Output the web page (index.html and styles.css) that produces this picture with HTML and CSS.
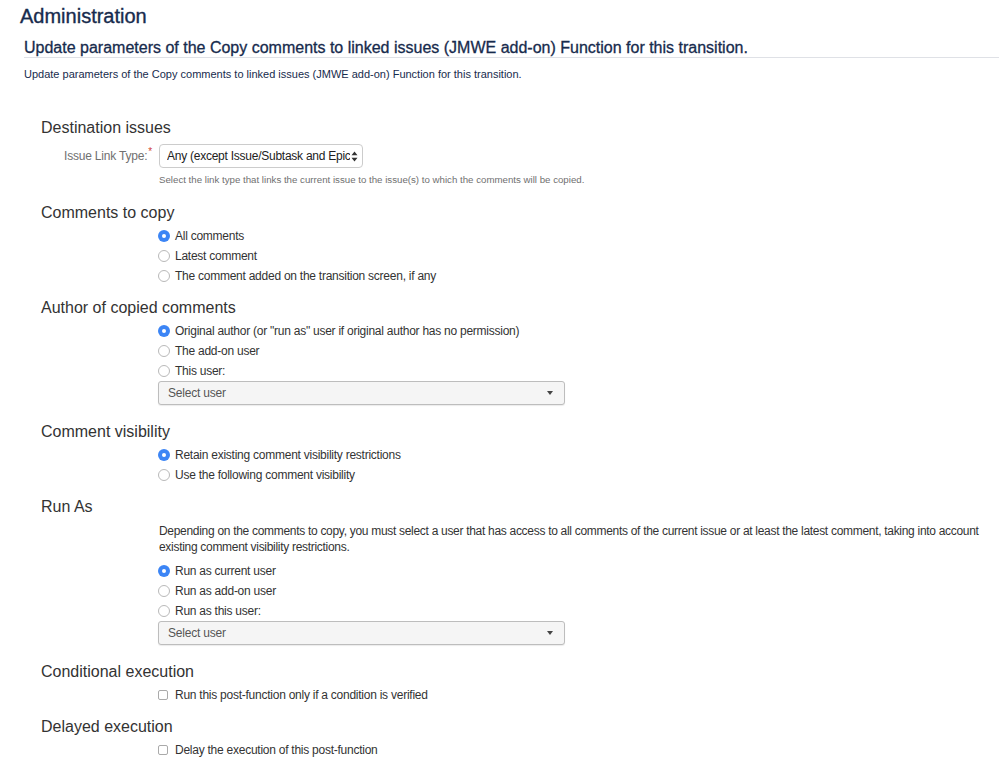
FILE: index.html
```html
<!DOCTYPE html>
<html>
<head>
<meta charset="utf-8">
<link rel="stylesheet" href="styles.css">
</head>
<body>
<h1 class="admin">Administration</h1>
<h2 class="sub">Update parameters of the Copy comments to linked issues (JMWE add-on) Function for this transition.</h2>
<p class="desc">Update parameters of the Copy comments to linked issues (JMWE add-on) Function for this transition.</p>

<div class="form">
  <section class="section">
    <h3>Destination issues</h3>
    <div class="field-row">
      <label class="flabel">Issue Link Type:<span class="req">*</span></label>
      <div class="fbody">
        <div class="nselect"><span class="nsel-text">Any (except Issue/Subtask and Epic</span>
          <svg class="updown" width="7" height="11" viewBox="0 0 7 11"><path d="M3.5 0.5 L6.5 4.2 H0.5 Z M3.5 10.5 L6.5 6.8 H0.5 Z" fill="#333"/></svg>
        </div>
        <div class="help">Select the link type that links the current issue to the issue(s) to which the comments will be copied.</div>
      </div>
    </div>
  </section>

  <section class="section">
    <h3>Comments to copy</h3>
    <div class="opts">
      <div class="opt"><span class="radio on"></span>All comments</div>
      <div class="opt"><span class="radio"></span>Latest comment</div>
      <div class="opt"><span class="radio"></span>The comment added on the transition screen, if any</div>
    </div>
  </section>

  <section class="section">
    <h3>Author of copied comments</h3>
    <div class="opts">
      <div class="opt"><span class="radio on"></span>Original author (or "run as" user if original author has no permission)</div>
      <div class="opt"><span class="radio"></span>The add-on user</div>
      <div class="opt"><span class="radio"></span>This user:</div>
      <div class="usel"><span>Select user</span><span class="caret"></span></div>
    </div>
  </section>

  <section class="section">
    <h3>Comment visibility</h3>
    <div class="opts">
      <div class="opt"><span class="radio on"></span>Retain existing comment visibility restrictions</div>
      <div class="opt"><span class="radio"></span>Use the following comment visibility</div>
    </div>
  </section>

  <section class="section">
    <h3>Run As</h3>
    <div class="opts">
      <p class="runtext">Depending on the comments to copy, you must select a user that has access to all comments of the current issue or at least the latest comment, taking into account<br>existing comment visibility restrictions.</p>
      <div class="opt"><span class="radio on"></span>Run as current user</div>
      <div class="opt"><span class="radio"></span>Run as add-on user</div>
      <div class="opt"><span class="radio"></span>Run as this user:</div>
      <div class="usel"><span>Select user</span><span class="caret"></span></div>
    </div>
  </section>

  <section class="section">
    <h3>Conditional execution</h3>
    <div class="opts">
      <div class="opt"><span class="check"></span>Run this post-function only if a condition is verified</div>
    </div>
  </section>

  <section class="section">
    <h3>Delayed execution</h3>
    <div class="opts">
      <div class="opt"><span class="check"></span>Delay the execution of this post-function</div>
    </div>
  </section>
</div>
</body>
</html>
```

FILE: styles.css
```css
html, body {
  margin: 0;
  padding: 0;
  background: #fff;
}
body {
  font-family: "Liberation Sans", Arial, sans-serif;
  color: #333;
  width: 999px;
  overflow: hidden;
}
.admin {
  margin: 0;
  padding: 4px 0 0 20px;
  font-size: 20px;
  line-height: 24px;
  font-weight: normal;
  color: #172b4d;
  -webkit-text-stroke: 0.35px #172b4d;
}
.sub {
  margin: 11px 0 0 24px;
  font-size: 16px;
  line-height: 18px;
  font-weight: normal;
  color: #172b4d;
  -webkit-text-stroke: 0.3px #172b4d;
  border-bottom: 1px solid #dfe1e6;
}
.desc {
  margin: 9px 0 0 24px;
  font-size: 11px;
  line-height: 14px;
  color: #172b4d;
}
.form {
  padding-top: 37px;
}
.section {
  display: flow-root;
  margin-top: 12px;
}
.section:first-child {
  margin-top: 0;
}
.section h3 {
  margin: 0 0 3px 41px;
  font-size: 16px;
  line-height: 20px;
  font-weight: normal;
  color: #333;
}
.field-row {
  display: flex;
  margin-top: 6px;
}
.flabel {
  width: 152px;
  text-align: right;
  font-size: 12px;
  color: #707070;
  padding-top: 5px;
  letter-spacing: -0.2px;
}
.req {
  color: #d04437;
  font-size: 10px;
  vertical-align: top;
  position: relative;
  top: -3px;
  margin-left: 1px;
}
.fbody {
  margin-left: 7px;
}
.nselect {
  height: 22px;
  border: 1px solid #ccc;
  border-radius: 4px;
  display: flex;
  align-items: center;
  padding: 0 4px 0 7px;
  box-sizing: content-box;
  width: 191px;
  background: #fff;
  font-size: 12px;
  letter-spacing: -0.25px;
  color: #222;
  overflow: hidden;
}
.nsel-text {
  white-space: nowrap;
  overflow: hidden;
  flex: 1;
}
.updown {
  flex: none;
  margin-left: 1px;
}
.help {
  margin-top: 5px;
  font-size: 9.7px;
  line-height: 14px;
  color: #707070;
  margin-bottom: 4px;
}
.opts {
  margin-left: 158px;
}
.opt {
  display: flex;
  align-items: center;
  height: 20px;
  font-size: 12px;
  letter-spacing: -0.25px;
  color: #333;
}
.radio {
  width: 12px;
  height: 12px;
  box-sizing: border-box;
  border: 1px solid #b9b9b9;
  border-radius: 50%;
  background: #fff;
  margin-right: 5px;
  flex: none;
  position: relative;
}
.radio.on {
  border: none;
  background: #3c85f5;
}
.radio.on::after {
  content: "";
  position: absolute;
  left: 4px;
  top: 4px;
  width: 4px;
  height: 4px;
  border-radius: 50%;
  background: #fff;
}
.check {
  width: 10px;
  height: 10px;
  box-sizing: border-box;
  border: 1px solid #aaa;
  border-radius: 2px;
  background: #fff;
  margin-right: 7px;
  flex: none;
}
.usel {
  width: 407px;
  height: 24px;
  box-sizing: border-box;
  border: 1px solid #bdbdbd;
  border-radius: 3px;
  background: #f5f5f5;
  box-shadow: 0 1px 1px rgba(0,0,0,0.08);
  display: flex;
  align-items: center;
  justify-content: space-between;
  padding: 0 11px 0 9px;
  font-size: 12px;
  letter-spacing: -0.2px;
  color: #555;
  margin-bottom: 5px;
}
.caret {
  width: 0;
  height: 0;
  border-left: 3.5px solid transparent;
  border-right: 3.5px solid transparent;
  border-top: 4px solid #444;
}
.runtext {
  margin: 6px 0 6px 1px;
  font-size: 12px;
  line-height: 16px;
  color: #333;
  letter-spacing: -0.3px;
}
```
